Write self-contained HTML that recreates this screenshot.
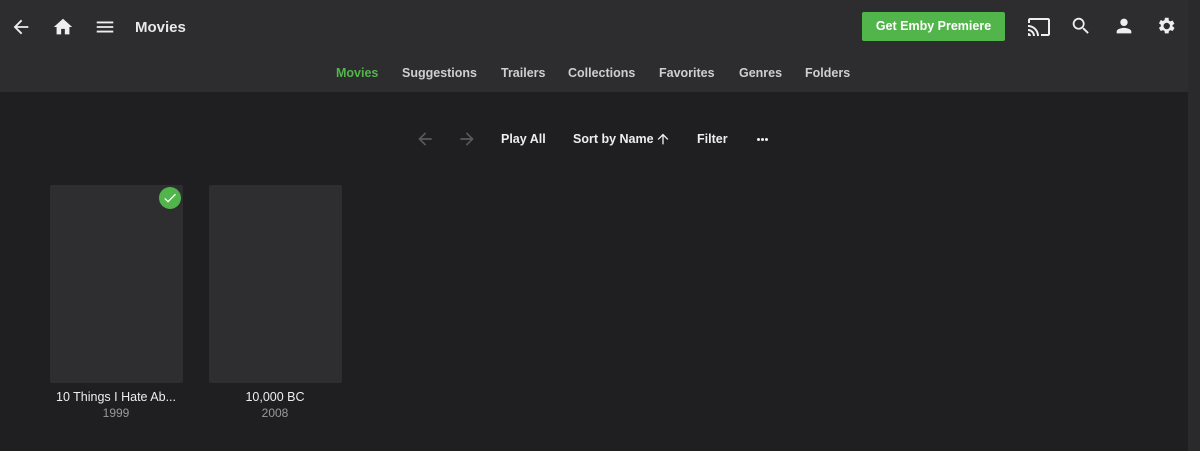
<!DOCTYPE html>
<html><head><meta charset="utf-8"><style>
*{margin:0;padding:0;box-sizing:border-box}
body{width:1200px;height:451px;background:#1f1f22;font-family:"Liberation Sans",Arial,sans-serif;color:#e8e8e8;position:relative;overflow:hidden}
.hdr{position:absolute;left:0;top:0;width:1188px;height:92px;background:#2d2d30}
.sb{position:absolute;right:0;top:0;width:12px;height:451px;background:#2a2a2d}
.a{position:absolute}
.t{font-weight:bold;font-size:12.5px}
.card{position:absolute;top:185px;width:133px;height:198px;background:#2e2e31;border-radius:2px}
.cap{position:absolute;font-size:12.5px;text-align:center;width:160px}
.dot{position:absolute;width:3px;height:3px;border-radius:50%;background:#eee;top:138px}
</style></head><body>
<div class="hdr"></div><div class="sb"></div>
<svg class="a" style="left:10px;top:16px" width="22" height="22" viewBox="0 0 24 24"><path d="M20 11H7.8l5.6-5.6L12 4l-8 8 8 8 1.4-1.4L7.8 13H20z" fill="#eee"/></svg>
<svg class="a" style="left:52px;top:16px" width="22" height="22" viewBox="0 0 24 24"><path d="M10 20v-6h4v6h5v-8h3L12 3 2 12h3v8z" fill="#eee"/></svg>
<svg class="a" style="left:94px;top:16px" width="22" height="22" viewBox="0 0 24 24"><path d="M3 18h18v-2H3zm0-5h18v-2H3zm0-7v2h18V6z" fill="#eee"/></svg>
<div class="a" style="left:135px;top:19px;font-size:15px;font-weight:bold">Movies</div>
<div class="a" style="left:862px;top:12px;width:143px;height:29px;background:#52b54b;border-radius:2px;color:#fff;font-weight:bold;font-size:12.5px;text-align:center;line-height:29px">Get Emby Premiere</div>
<svg class="a" style="left:1027px;top:15px" width="24" height="24" viewBox="0 0 24 24"><path d="M21 3H3c-1.1 0-2 .9-2 2v3h2V5h18v14h-7v2h7c1.1 0 2-.9 2-2V5c0-1.1-.9-2-2-2zM1 18v3h3c0-1.660-1.340-3-3-3zm0-4v2c2.760 0 5 2.240 5 5h2c0-3.870-3.130-7-7-7zm0-4v2c4.970 0 9 4.030 9 9h2c0-6.080-4.930-11-11-11z" fill="#eee"/></svg>
<svg class="a" style="left:1070px;top:15px" width="22" height="22" viewBox="0 0 24 24"><path d="M15.5 14h-.8l-.3-.3A6.5 6.5 0 1 0 9.5 16a6.5 6.5 0 0 0 4.2-1.6l.3.3v.8l5 5 1.5-1.5-5-5zm-6 0C7 14 5 12 5 9.5S7 5 9.5 5 14 7 14 9.5 12 14 9.5 14z" fill="#eee"/></svg>
<svg class="a" style="left:1113px;top:15px" width="22" height="22" viewBox="0 0 24 24"><path d="M12 12c2.2 0 4-1.8 4-4s-1.8-4-4-4-4 1.8-4 4 1.8 4 4 4zm0 2c-2.7 0-8 1.3-8 4v2h16v-2c0-2.7-5.3-4-8-4z" fill="#eee"/></svg>
<svg class="a" style="left:1155px;top:15px" width="22" height="22" viewBox="0 0 24 24"><path d="M19.1 12.9a7 7 0 0 0 0-1.8l2.1-1.6-2-3.5-2.5 1a7 7 0 0 0-1.6-.9L14.8 3h-4l-.4 2.6a7 7 0 0 0-1.6.9l-2.5-1-2 3.5 2.1 1.6a7 7 0 0 0 0 1.8l-2.1 1.6 2 3.5 2.5-1a7 7 0 0 0 1.6.9l.4 2.6h4l.4-2.6a7 7 0 0 0 1.6-.9l2.5 1 2-3.5-2.1-1.6zM12.8 15.5a3.5 3.5 0 1 1 0-7 3.5 3.5 0 0 1 0 7z" fill="#eee"/></svg>
<div class="a t" style="left:336px;top:66px;color:#52b54b">Movies</div>
<div class="a t" style="left:402px;top:66px;color:#cfcfcf">Suggestions</div>
<div class="a t" style="left:501px;top:66px;color:#cfcfcf">Trailers</div>
<div class="a t" style="left:568px;top:66px;color:#cfcfcf">Collections</div>
<div class="a t" style="left:659px;top:66px;color:#cfcfcf">Favorites</div>
<div class="a t" style="left:739px;top:66px;color:#cfcfcf">Genres</div>
<div class="a t" style="left:805px;top:66px;color:#cfcfcf">Folders</div>
<svg class="a" style="left:415px;top:129px" width="20" height="20" viewBox="0 0 24 24"><path d="M20 11H7.8l5.6-5.6L12 4l-8 8 8 8 1.4-1.4L7.8 13H20z" fill="#5a5a5d"/></svg>
<svg class="a" style="left:457px;top:129px" width="20" height="20" viewBox="0 0 24 24"><path d="M4 11h12.2l-5.6-5.6L12 4l8 8-8 8-1.4-1.4 5.6-5.6H4z" fill="#5a5a5d"/></svg>
<div class="a t" style="left:501px;top:132px;color:#eee">Play All</div>
<div class="a t" style="left:573px;top:132px;color:#eee">Sort by Name</div>
<svg class="a" style="left:655px;top:131px" width="16" height="16" viewBox="0 0 24 24"><path d="M4 12l1.4 1.4L11 7.8V20h2V7.8l5.6 5.6L20 12l-8-8z" fill="#eee"/></svg>
<div class="a t" style="left:697px;top:132px;color:#eee">Filter</div>
<div class="dot" style="left:757px"></div><div class="dot" style="left:761px"></div><div class="dot" style="left:765px"></div>
<div class="card" style="left:50px"></div>
<div class="a" style="left:159px;top:187px;width:22px;height:22px;border-radius:50%;background:#52b54b"></div>
<svg class="a" style="left:162px;top:190px" width="16" height="16" viewBox="0 0 24 24"><path d="M9 16.2L4.8 12l-1.4 1.4L9 19 21 7l-1.4-1.4z" fill="#fff"/></svg>
<div class="card" style="left:209px"></div>
<div class="cap" style="left:36px;top:390px;color:#eee">10 Things I Hate Ab...</div>
<div class="cap" style="left:36px;top:406px;color:#999;font-size:12px">1999</div>
<div class="cap" style="left:195px;top:390px;color:#eee">10,000 BC</div>
<div class="cap" style="left:195px;top:406px;color:#999;font-size:12px">2008</div>
</body></html>
